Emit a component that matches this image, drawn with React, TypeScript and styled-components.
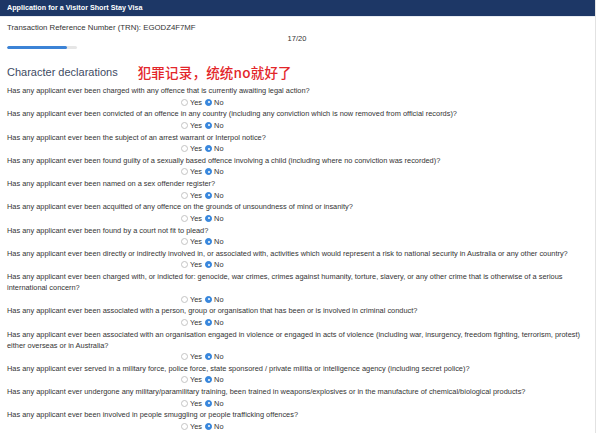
import React from "react";
import styled, { createGlobalStyle } from "styled-components";

const Global = createGlobalStyle`
  html, body { margin: 0; padding: 0; background: #fff; }
  body { font-family: "Liberation Sans", Arial, sans-serif; }
`;

const Page = styled.div`
  width: 596px;
  min-height: 433px;
  border-right: 1px solid #e2e2e2;
  box-sizing: border-box;
  background: #fff;
`;

const Header = styled.div`
  height: 16px;
  background: #1d3766;
  color: #fff;
  font-weight: bold;
  font-size: 7.2px;
  line-height: 16px;
  padding-left: 7px;
  border-bottom: 1px solid #e8ecf2;
`;

const Body = styled.div`
  padding: 0 8px 0 7px;
  color: #333;
`;

const Trn = styled.div`
  margin-top: 6px;
  font-size: 7.8px;
  line-height: 10px;
`;

const Counter = styled.div`
  text-align: center;
  font-size: 7.5px;
  line-height: 10px;
  margin-top: 1px;
`;

const Track = styled.div`
  margin-top: 2px;
  width: 70px;
  height: 3px;
  background: #e6e6e6;
  border-radius: 2px;
  overflow: hidden;
`;

const Fill = styled.div`
  height: 100%;
  background: #3c83d6;
  border-radius: 2px;
`;

const HeadingRow = styled.div`
  display: flex;
  align-items: center;
  gap: 20px;
  margin-top: 15px;
  height: 16px;
`;

const Heading = styled.h2`
  margin: 0;
  font-weight: normal;
  font-size: 11px;
  color: #3e4b63;
  font-family: "Liberation Sans", Arial, sans-serif;
`;

const Note = styled.span`
  font-family: "Noto Sans CJK SC", "Liberation Sans", sans-serif;
  color: #e3262a;
  font-size: 13.5px;
  font-weight: 500;
  letter-spacing: 0.2px;
`;

const List = styled.div`
  margin-top: 5px;
`;

const Question = styled.div`
  font-size: 7.4px;
  line-height: 11px;
`;

const RadioRow = styled.div`
  display: flex;
  align-items: center;
  height: 12.25px;
  padding-left: 174px;
  font-size: 7.4px;
`;

const Option = styled.label`
  display: flex;
  align-items: center;
  gap: 2px;
  margin-right: 3px;
`;

const Dot = styled.span<{ $on?: boolean }>`
  width: 7px;
  height: 7px;
  border-radius: 50%;
  box-sizing: border-box;
  border: 1px solid ${(p) => (p.$on ? "#2f80d8" : "#c4c4c4")};
  background: ${(p) => (p.$on ? "#3b8ae0" : "#fff")};
  display: flex;
  align-items: center;
  justify-content: center;
  &::after {
    content: "";
    width: 2px;
    height: 2px;
    border-radius: 50%;
    background: ${(p) => (p.$on ? "#fff" : "transparent")};
  }
`;

const questions = [
  "Has any applicant ever been charged with any offence that is currently awaiting legal action?",
  "Has any applicant ever been convicted of an offence in any country (including any conviction which is now removed from official records)?",
  "Has any applicant ever been the subject of an arrest warrant or Interpol notice?",
  "Has any applicant ever been found guilty of a sexually based offence involving a child (including where no conviction was recorded)?",
  "Has any applicant ever been named on a sex offender register?",
  "Has any applicant ever been acquitted of any offence on the grounds of unsoundness of mind or insanity?",
  "Has any applicant ever been found by a court not fit to plead?",
  "Has any applicant ever been directly or indirectly involved in, or associated with, activities which would represent a risk to national security in Australia or any other country?",
  "Has any applicant ever been charged with, or indicted for: genocide, war crimes, crimes against humanity, torture, slavery, or any other crime that is otherwise of a serious international concern?",
  "Has any applicant ever been associated with a person, group or organisation that has been or is involved in criminal conduct?",
  "Has any applicant ever been associated with an organisation engaged in violence or engaged in acts of violence (including war, insurgency, freedom fighting, terrorism, protest) either overseas or in Australia?",
  "Has any applicant ever served in a military force, police force, state sponsored / private militia or intelligence agency (including secret police)?",
  "Has any applicant ever undergone any military/paramilitary training, been trained in weapons/explosives or in the manufacture of chemical/biological products?",
  "Has any applicant ever been involved in people smuggling or people trafficking offences?",
];

export default function App() {
  return (
    <>
      <Global />
      <Page>
        <Header>Application for a Visitor Short Stay Visa</Header>
        <Body>
          <Trn>Transaction Reference Number (TRN): EGODZ4F7MF</Trn>
          <Counter>17/20</Counter>
          <Track>
            <Fill style={{ width: `${(17 / 20) * 100}%` }} />
          </Track>
          <HeadingRow>
            <Heading>Character declarations</Heading>
            <Note>犯罪记录，统统no就好了</Note>
          </HeadingRow>
          <List>
            {questions.map((q, i) => (
              <div key={i}>
                <Question>{q}</Question>
                <RadioRow>
                  <Option>
                    <Dot />
                    Yes
                  </Option>
                  <Option>
                    <Dot $on />
                    No
                  </Option>
                </RadioRow>
              </div>
            ))}
          </List>
        </Body>
      </Page>
    </>
  );
}
